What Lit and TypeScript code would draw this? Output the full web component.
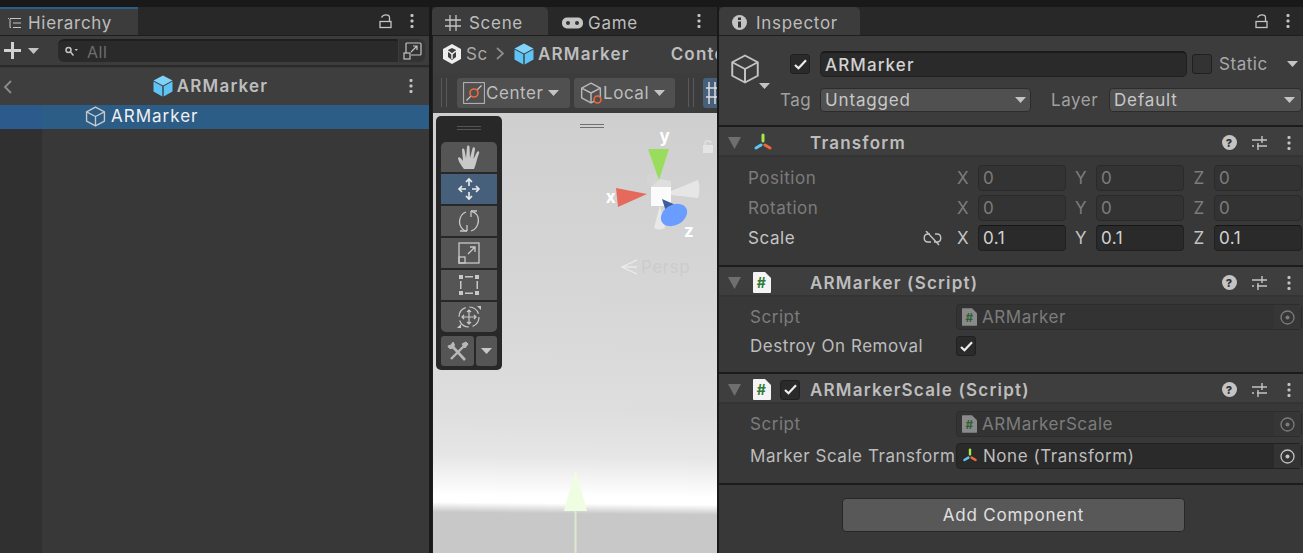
import { LitElement, html, css, svg } from 'lit';
import { customElement } from 'lit/decorators.js';

const dots = html`<svg class="dots" width="4" height="14" viewBox="0 0 4 14"><rect x="0.5" y="0" width="3" height="3" rx="1" fill="#c4c4c4"/><rect x="0.5" y="5.5" width="3" height="3" rx="1" fill="#c4c4c4"/><rect x="0.5" y="11" width="3" height="3" rx="1" fill="#c4c4c4"/></svg>`;

const lock = html`<svg width="13" height="15" viewBox="0 0 13 15" fill="none" stroke="#c4c4c4" stroke-width="1.3"><rect x="1" y="7.5" width="11" height="6"/><path d="M10.5 7.5 V3.5 C10.5 1.5 9 .8 7 .8 C5 .8 3.5 1.5 2.5 3.5" /></svg>`;

const cube = (size: number, color = '#c4c4c4') => html`<svg width=${size} height=${size} viewBox="0 0 20 20" fill="none" stroke=${color} stroke-width="1.3" stroke-linejoin="round"><path d="M10 1 L18.500 5.500 V14.500 L10 19 L1.500 14.500 V5.500 Z"/><path d="M1.500 5.500 L10 10 L18.500 5.500 M10 10 V19"/></svg>`;

const blueCube = html`<svg width="20" height="22" viewBox="0 0 20 22"><path d="M10 .5 L19.500 5.500 L10 10.500 L.5 5.500 Z" fill="#7fd3fb"/><path d="M.5 6.500 L9.300 11.300 V21.500 L.5 16.500 Z" fill="#5ec4f6"/><path d="M19.500 6.500 L10.700 11.300 V21.500 L19.500 16.500 Z" fill="#5ec4f6"/></svg>`;

const triangle = (color: string, w = 11, h = 6) => html`<svg width=${w} height=${h} viewBox="0 0 11 6"><path d="M0 0 H11 L5.500 6 Z" fill=${color}/></svg>`;

const foldout = html`<svg width="13" height="13" viewBox="0 0 13 13"><path d="M0 1 H13 L6.500 13 Z" fill="#6f6f6f"/></svg>`;

const transformIcon = (size: number) => html`<svg width=${size} height=${size} viewBox="0 0 20 20" fill="none" stroke-width="3" stroke-linecap="round"><path d="M10 2 V8" stroke="#a6e64f"/><path d="M8 12 L3 15" stroke="#5cc6f5"/><path d="M12 12 L17 15" stroke="#f0683c"/></svg>`;

const scriptIcon = (dim = false) => html`<svg width=${dim ? 15 : 18} height=${dim ? 18 : 21} viewBox="0 0 18 21"><path d="M1 0 H12 L18 6 V20 Q18 21 17 21 H1 Q0 21 0 20 V1 Q0 0 1 0 Z" fill=${dim ? '#8a8a8a' : '#f4f4f4'}/><text x="9" y="16" text-anchor="middle" font-family="Inter" font-weight="700" font-size="14" fill=${dim ? '#2f5f33' : '#2f7a37'}>#</text></svg>`;

const check = html`<svg width="13" height="11" viewBox="0 0 13 11" fill="none" stroke="#eeeeee" stroke-width="2.200"><path d="M1 6 L4.500 9.300 L12 1.300"/></svg>`;

const help = html`<svg width="15" height="15" viewBox="0 0 15 15"><circle cx="7.500" cy="7.500" r="7.500" fill="#c4c4c4"/><text x="7.500" y="11.500" text-anchor="middle" font-family="Inter" font-weight="800" font-size="11" fill="#333">?</text></svg>`;

const sliders = html`<svg width="15" height="14" viewBox="0 0 15 14" fill="none" stroke="#c4c4c4" stroke-width="1.400"><path d="M0 4 H15 M10 0 V7 M0 10 H2 M5 10 H15 M6 7 V14"/></svg>`;

const target = (color: string) => html`<svg width="15" height="15" viewBox="0 0 15 15"><circle cx="7.500" cy="7.500" r="6.500" fill="none" stroke=${color} stroke-width="1.300"/><circle cx="7.500" cy="7.500" r="2" fill=${color}/></svg>`;

const headerIcons = html`<span class="hicons">${help}${sliders}${dots}</span>`;

const toolIcons = [
  svg`<path d="M7 24 C3 19 1 15 1 13 C2 11 4 13 6 16 L5 5 C5 3 7 3 7.500 5 L9 13 L10 2 C10 0 12.500 0 12.500 2 L13 13 L15.500 3.500 C16 1.500 18 2 18 4 L16.500 14 L20 7 C21 5.500 23 6.500 22 8.500 C20 13 19 20 17 24 Z" fill="#c8c8c8"/>`,
  svg`<g fill="none" stroke="#eeeeee" stroke-width="1.600"><path d="M12 2 V9 M12 15 V22 M2 12 H9 M15 12 H22"/><path d="M9 5 L12 2 L15 5 M9 19 L12 22 L15 19 M5 9 L2 12 L5 15 M19 9 L22 12 L19 15"/></g>`,
  svg`<g fill="none" stroke="#c8c8c8" stroke-width="1.300"><path d="M9 3 C3 5 1 13 4 18 C5.500 20.500 8 22 10 22"/><path d="M14 22 C21 20 23 11 20 6 C18.500 3.500 16 2.500 14 2"/><path d="M14 2 H20 M14 2 V8 M10 22 H3 M10 22 V16"/></g>`,
  svg`<g fill="none" stroke="#c8c8c8" stroke-width="1.300"><rect x="2" y="2" width="20" height="20"/><rect x="2" y="16" width="6" height="6"/><path d="M11 13 L18 6 M13 6 H18 V11"/></g>`,
  svg`<g fill="#c8c8c8"><rect x="2" y="2" width="4" height="4"/><rect x="18" y="2" width="4" height="4"/><rect x="2" y="18" width="4" height="4"/><rect x="18" y="18" width="4" height="4"/><rect x="8" y="3" width="8" height="1.500"/><rect x="8" y="19.500" width="8" height="1.500"/><rect x="3" y="8" width="1.500" height="8"/><rect x="19.500" y="8" width="1.500" height="8"/></g>`,
  svg`<g fill="none" stroke="#c8c8c8" stroke-width="1.200"><circle cx="12" cy="12" r="10" stroke-dasharray="12 3.700"/><path d="M12 5 V19 M5 12 H19 M10 7 L12 5 L14 7 M10 17 L12 19 L14 17 M7 10 L5 12 L7 14 M17 10 L19 12 L17 14"/></g><path d="M20 1 H24 V5 Z M0 23 L4 19 V23 Z" fill="#c8c8c8"/>`,
];

@customElement('app-root')
export class AppRoot extends LitElement {
  static styles = css`
    :host {
      display: flex;
      width: 1303px;
      height: 553px;
      overflow: hidden;
      padding-top: 7px;
      box-sizing: border-box;
      background: #191919;
      font-family: Inter, 'Noto Sans', sans-serif;
      font-size: 17px;
      color: #c4c4c4;
      letter-spacing: 0.55px;
      gap: 3px;
    }
    svg { display: block; flex: none; }
    .panel { display: flex; flex-direction: column; min-width: 0; overflow: hidden; }
    .hier { width: 429px; background: #383838; }
    .scene { width: 285px; margin-right: -1px; background: #383838; }
    .insp { flex: 1; margin-left: 0; background: #383838; }

    .tabs { height: 29px; flex: none; display: flex; align-items: center; background: #282828; border-bottom: 1px solid #1e1e1e; box-sizing: border-box; }
    .tab { height: 100%; display: flex; align-items: center; background: #3c3c3c; box-sizing: border-box; border-radius: 5px 5px 0 0; flex: none; padding-top: 3px; letter-spacing: 0.7px; }
    .tab.plain { background: none; }
    .tabs .right { margin-left: auto; display: flex; align-items: center; }

    .h-tab { width: 138px; padding-left: 8px; gap: 7px; border-top: 2px solid #2a5d8a; border-radius: 0; color: #bdbdbd; padding-top: 2px; }
    .h-lock { gap: 18px; margin-right: 15px; }
    .h-tools { height: 31px; flex: none; display: flex; align-items: center; background: #3c3c3c; border-bottom: 2px solid #2a2a2a; box-sizing: border-box; padding-left: 4px; }
    .plus { width: 17px; height: 17px; position: relative; margin-right: 7px; }
    .plus::before, .plus::after { content: ''; position: absolute; background: #d2d2d2; }
    .plus::before { left: 0; right: 0; top: 7px; height: 3px; }
    .plus::after { top: 0; bottom: 0; left: 7px; width: 3px; }
    .search { margin-left: 19px; width: 340px; height: 23px; border-radius: 6px 0 0 6px; background: #2a2a2a; border-top: 2px solid #1f1f1f; box-sizing: border-box; display: flex; align-items: center; gap: 9px; padding-left: 7px; color: #6e6e6e; font-size: 16px; }
    .scope { width: 26px; height: 23px; margin-left: 1px; background: #333; border-radius: 0 6px 6px 0; display: flex; align-items: center; justify-content: center; }
    .crumb { height: 37px; flex: none; display: flex; align-items: center; background: #3e3e3e; position: relative; box-sizing: border-box; }
    .h-crumb { justify-content: center; gap: 4px; font-weight: 600; letter-spacing: 1.2px; padding: 0 4px 2px 0; margin-top: 1px; color: #bdbdbd; }
    .back { position: absolute; left: 3px; top: 12px; }
    .h-crumb .dots { position: absolute; right: 16px; top: 11px; }
    .sel { height: 24px; flex: none; display: flex; align-items: center; background: #2c5d87; padding: 0 0 2px 85px; box-sizing: border-box; gap: 5px; color: #f0f0f0; position: relative; letter-spacing: 1px; }
    .sel::before { content: ''; position: absolute; left: 0; top: 0; bottom: 0; width: 42px; background: #2d5a8c; }
    .gutter { flex: 1; width: 42px; background: #303030; }

    .s-tab { width: 116px; padding-left: 13px; gap: 8px; color: #bdbdbd; }
    .g-tab { padding-left: 14px; gap: 5px; color: #bdbdbd; }
    .s-crumb { padding: 0 0 2px 10px; white-space: nowrap; font-weight: 600; letter-spacing: 1.2px; color: #bdbdbd; overflow: hidden; border-left: 1px solid #202020; }
    .s-crumb .sc { width: 20px; margin-left: 5px; font-weight: 400; letter-spacing: 0.55px; color: #a8a8a8; }
    .s-crumb .chev { margin: 0 10px 0 10px; }
    .s-crumb .name { margin-left: 4px; }
    .s-crumb .ctx { margin-left: 41px; }
    .s-bar { height: 40px; flex: none; display: flex; align-items: center; background: #3c3c3c; padding-left: 8px; border-left: 1px solid #202020; padding-bottom: 1px; box-sizing: border-box; }
    .grip { width: 6px; height: 29px; border-left: 1px solid #595959; border-right: 1px solid #595959; box-sizing: border-box; margin-right: 10px; flex: none; }
    .grip.second { margin: 0 9px; }
    .tbtn { height: 30px; background: #505050; border-radius: 3px; display: flex; align-items: center; box-sizing: border-box; padding-left: 6px; gap: 1px; margin-right: 4px; color: #bdbdbd; flex: none; }
    .tbtn.center { width: 113px; gap: 1px; }
    .tbtn.local { width: 101px; }
    .tbtn > svg:last-child { margin-left: 4px; }
    .cube-wrap { position: relative; }
    .cube-wrap .dot { position: absolute; left: 13px; top: 13px; }
    .blue { width: 20px; height: 30px; background: #46607c; border-radius: 3px 0 0 3px; flex: none; padding: 4px 0 0 3px; box-sizing: border-box; }

    .view { flex: 1; position: relative; overflow: hidden; border-left: 1px solid #202020; background: linear-gradient(180.6deg, #cfcfcf 0, #d6d6d6 180px, #dedede 300px, #e6e6e6 345px, #ffffff 385px, #ffffff 392px, #c8c8c8 402px); }
    .tools { position: absolute; left: 3px; top: 3px; width: 66px; height: 254px; background: #282828; border-radius: 5px; box-sizing: border-box; padding: 26px 5px 0; display: flex; flex-direction: column; gap: 2px; }
    .handle { position: absolute; height: 1px; border-top: 1px solid #555; border-bottom: 1px solid #555; padding-top: 1px; width: 24px; }
    .tools .handle { left: 21px; top: 10px; }
    .view > .handle { left: 147px; top: 11px; border-color: #707070; }
    .tool { height: 30px; flex: none; background: #555; display: flex; align-items: center; justify-content: center; }
    .tool.first { border-radius: 5px 5px 0 0; }
    .tool.last { border-radius: 0 0 5px 5px; }
    .tool.on { background: #46607c; }
    .tool-row { display: flex; gap: 2px; margin-top: 2px; }
    .tool-row .tool { border-radius: 3px; }
    .gizmo { position: absolute; left: 164px; top: 8px; }
    .z-label { position: absolute; left: 251px; top: 108px; color: #fff; font-weight: 700; font-size: 17px; }
    .persp { position: absolute; left: 188px; top: 144px; display: flex; align-items: center; gap: 3px; color: #cccccc; }
    .lock-s { position: absolute; left: 270px; top: 27px; }
    .arrow { position: absolute; left: 130px; top: 357px; }

    .i-tab { width: 141px; padding-left: 13px; gap: 9px; color: #bdbdbd; }
    .i-right { gap: 18px; margin-right: 13px; }
    .i-head { height: 91px; flex: none; background: #3c3c3c; border-bottom: 2px solid #1c1c1c; box-sizing: border-box; display: grid; grid-template-columns: 60px 41px 1fr; grid-template-rows: 26px 24px; row-gap: 11px; align-content: start; padding-top: 15px; position: relative; }
    .big-cube { margin: 0 0 0 11px; grid-row: 1; position: relative; top: 3px; }
    .i-tri { position: absolute; left: 40px; top: 47px; }
    .chk { width: 20px; height: 20px; border-radius: 3px; background: #2a2a2a; border: 1px solid #202020; display: flex; align-items: center; justify-content: center; box-sizing: border-box; flex: none; }
    .chk.empty { background: #333; }
    .i-chk { margin: 3px 0 0 11px; }
    .name-row { display: flex; align-items: center; }
    .name-field { width: 367px; height: 26px; background: #2a2a2a; border: 1px solid #202020; border-top: 2px solid #1a1a1a; border-radius: 5px; box-sizing: border-box; display: flex; align-items: center; padding-left: 4px; font-weight: 500; letter-spacing: 1.1px; color: #d2d2d2; }
    .name-row .chk { margin-left: 5px; }
    .static { margin-left: 7px; color: #a8a8a8; }
    .name-row svg { margin-left: auto; margin-right: 5px; }
    .tag-row { grid-column: 1 / 4; display: flex; align-items: center; padding-left: 61px; }
    .lbl { color: #a0a0a0; }
    .drop { height: 24px; background: #505050; border: 1px solid #2c2c2c; border-radius: 4px; box-sizing: border-box; display: flex; align-items: center; justify-content: space-between; padding: 0 4px 0 4px; color: #c8c8c8; letter-spacing: 0.85px; }
    .tag-row .lbl { width: 40px; }
    .drop.tag { width: 211px; }
    .tag-row .layer-lbl { margin-left: 20px; width: 58px; }
    .drop.layer { width: 193px; padding-right: 6px; }

    .comp { border-bottom: 2px solid #1c1c1c; box-sizing: border-box; display: flex; flex-direction: column; flex: none; }
    .c-head { height: 30px; background: #3e3e3e; border-bottom: 2px solid #343434; box-sizing: border-box; display: grid; grid-template-columns: 25px 27px 30px 1fr auto; align-items: center; padding: 3px 0 0 9px; font-weight: 600; letter-spacing: 1.2px; color: #bdbdbd; }
    .hicons { display: flex; align-items: center; gap: 15px; margin-right: 12px; }
    .hicons .dots { margin-left: 5px; }
    .rows-t { height: 108px; padding: 8px 1px 0 29px; box-sizing: border-box; display: flex; flex-direction: column; gap: 4px; }
    .t-row { height: 26px; display: grid; grid-template-columns: 168px 32px 30px 88px 30px 88px 30px 88px; align-items: center; color: #7c7c7c; }
    .t-row .ax { text-align: center; }
    .t-row .link { justify-self: end; margin-right: 6px; }
    .t-row.live { color: #c4c4c4; }
    .num { height: 26px; background: #333; border: 1px solid #2a2a2a; border-radius: 4px; box-sizing: border-box; display: flex; align-items: center; padding-left: 4px; color: #7c7c7c; }
    .live .num { background: #2a2a2a; border-color: #202020; border-top-color: #161616; color: #d2d2d2; }
    .rows-s { padding: 7px 1px 0 31px; box-sizing: border-box; display: flex; flex-direction: column; }
    .rows-s.one { height: 75px; }
    .rows-s.two { height: 79px; }
    .s-row { height: 26px; display: grid; grid-template-columns: 206px 1fr; align-items: center; color: #bdbdbd; white-space: nowrap; }
    .s-row.dim { color: #7c7c7c; }
    .one .s-row:last-child { margin-top: 3px; }
    .two .s-row:last-child { margin-top: 6px; }
    .obj { height: 26px; background: #2a2a2a; border: 1px solid #222; border-radius: 4px; box-sizing: border-box; display: flex; align-items: center; padding-left: 5px; gap: 5px; }
    .obj .pick { margin-left: auto; width: 27px; height: 100%; background: #333; display: flex; align-items: center; justify-content: center; }
    .dim .obj { background: #333; border-color: #2c2c2c; }
    .dim .obj .pick { background: #363636; }
    .add-wrap { display: flex; justify-content: flex-start; padding: 13px 0 0 123px; }
    .add { width: 343px; height: 34px; background: #585858; border: 1px solid #272727; border-radius: 4px; box-sizing: border-box; display: flex; align-items: center; justify-content: center; color: #e0e0e0; letter-spacing: 0.8px; }
    .tool-row .wrench { width: 33px; }
    .tool-row .more { width: 21px; }
    .scene-dots { margin-right: 16px; }
  `;

  private compHeader(icon: unknown, name: string, toggled = false) {
    return html`<div class="c-head">
      ${foldout}${icon}
      <span>${toggled ? html`<span class="chk">${check}</span>` : ''}</span>
      <span>${name}</span>
      ${headerIcons}
    </div>`;
  }

  private xyzRow(label: string, x: string, y: string, z: string, live = false) {
    const link = live
      ? html`<svg class="link" width="19" height="15" viewBox="0 0 19 15" fill="none" stroke="#c4c4c4" stroke-width="1.400"><path d="M7 3 H5 C0 3 0 11 5 11 H8 M12 3 H14 C19 3 19 11 14 11 H11 M3 0 L16 14"/></svg>`
      : '';
    return html`<div class="t-row ${live ? 'live' : ''}">
      <span>${label}</span>
      <span class="linkcell">${link}</span>
      <span class="ax">X</span><span class="num">${x}</span>
      <span class="ax">Y</span><span class="num">${y}</span>
      <span class="ax">Z</span><span class="num">${z}</span>
    </div>`;
  }

  private hierarchy() {
    return html`<div class="panel hier">
      <div class="tabs">
        <div class="tab h-tab">
          <svg width="13" height="12" viewBox="0 0 13 12" fill="none" stroke="#c4c4c4" stroke-width="1.200"><path d="M2 1.500 H13 M5 6 H13 M5 10.500 H13"/><path d="M0 1.500 H1 M2 2 V10.500 H3" stroke-width="1"/></svg>
          Hierarchy
        </div>
        <div class="right h-lock">${lock}${dots}</div>
      </div>
      <div class="h-tools">
        <span class="plus"></span>${triangle('#c4c4c4')}
        <div class="search">
          <svg width="13" height="11" viewBox="0 0 13 11" fill="none" stroke="#c4c4c4" stroke-width="1.500"><circle cx="3.500" cy="4" r="2.500"/><path d="M5.500 6 L8.500 9.500"/><path d="M9.500 3 H13 L11.250 5 Z" fill="#c4c4c4" stroke="none"/></svg>
          All
        </div>
        <div class="scope"><svg width="19" height="18" viewBox="0 0 19 18" fill="none" stroke="#c4c4c4" stroke-width="1.200"><path d="M3 11 V2 Q3 1 4 1 H17 Q18 1 18 2 V12 Q18 13 17 13 H8"/><rect x="1" y="11" width="6" height="6"/><path d="M8 10 L14 4 M10 4 H14 V8"/></svg></div>
      </div>
      <div class="crumb h-crumb">
        <svg class="back" width="9" height="14" viewBox="0 0 9 14" fill="none" stroke="#8c8c8c" stroke-width="1.800"><path d="M8 1 L2 7 L8 13"/></svg>
        ${blueCube}ARMarker${dots}
      </div>
      <div class="sel">${cube(21, '#c8c8c8')}ARMarker</div>
      <div class="gutter"></div>
    </div>`;
  }

  private sceneView() {
    return html`<div class="panel scene">
      <div class="tabs">
        <div class="tab s-tab">
          <svg width="16" height="16" viewBox="0 0 16 16" fill="none" stroke="#c4c4c4" stroke-width="1.300"><path d="M5 0 V16 M11 0 V16 M0 5 H16 M0 11 H16"/></svg>
          Scene
        </div>
        <div class="tab plain g-tab">
          <svg width="21" height="12" viewBox="0 0 21 12"><rect width="21" height="11" y="0.500" rx="5" fill="#c4c4c4"/><circle cx="6" cy="6" r="2" fill="#333"/><circle cx="15" cy="6" r="2" fill="#333"/></svg>
          Game
        </div>
        <div class="right scene-dots">${dots}</div>
      </div>
      <div class="crumb s-crumb">
        <svg width="18" height="20" viewBox="0 0 18 20"><path d="M9 0 L18 5 V15 L9 20 L0 15 V5 Z" fill="#eeeeee"/><path d="M5 6 L9 4 L13 6 V13 L9 16 L5 13 Z" fill="#3e3e3e"/><path d="M5 7 L9 10 L13 7 M9 10 V15" stroke="#eeeeee" stroke-width="1.500" fill="none"/></svg>
        <span class="sc">Sc</span>
        <svg class="chev" width="8" height="13" viewBox="0 0 8 13" fill="none" stroke="#8c8c8c" stroke-width="1.800"><path d="M1 1 L7 6.500 L1 12"/></svg>
        ${blueCube}<span class="name">ARMarker</span><span class="ctx">Conte</span>
      </div>
      <div class="s-bar">
        <span class="grip"></span>
        <div class="tbtn center">
          <svg width="22" height="22" viewBox="0 0 22 22" fill="none"><rect x=".6" y=".6" width="20.800" height="20.800" stroke="#b8b8b8" stroke-width="1"/><path d="M3.500 18.500 L8 14 M14 8 L18.500 3.500" stroke="#c8c8c8" stroke-width="1.200"/><circle cx="11" cy="11" r="4" stroke="#f0683c" stroke-width="1.600"/></svg>
          Center${triangle('#c4c4c4')}
        </div>
        <div class="tbtn local">
          <span class="cube-wrap">${cube(22, '#b8b8b8')}<svg class="dot" width="9" height="9" viewBox="0 0 9 9" fill="none"><circle cx="4.500" cy="4.500" r="3.500" fill="#505050" stroke="#f0683c" stroke-width="1.500"/></svg></span>
          Local${triangle('#c4c4c4')}
        </div>
        <span class="grip second"></span>
        <div class="blue"><svg width="12" height="22" viewBox="0 0 12 22" fill="none" stroke="#dddddd" stroke-width="1.500"><path d="M3 0 V22 M9 0 V22 M0 6 H12 M0 15 H12"/></svg></div>
      </div>
      <div class="view">
        <span class="handle"></span>
        ${this.gizmo()}
        <svg class="arrow" width="25" height="84" viewBox="0 0 25 84"><path d="M12.500 0 L24 41 H1 Z" fill="#effde2"/><rect x="11.500" y="41" width="2" height="43" fill="#dce8d0"/></svg>
        <div class="tools">
          <span class="handle"></span>
          ${toolIcons.map((p, i) => html`<div class="tool ${i === 0 ? 'first' : ''} ${i === 1 ? 'on' : ''} ${i === 5 ? 'last' : ''}"><svg width="24" height="24" viewBox="0 0 24 24">${p}</svg></div>`)}
          <div class="tool-row">
            <div class="tool wrench"><svg width="22" height="21" viewBox="0 0 22 21" fill="none" stroke="#b8b8b8"><path d="M6 6 L18 19" stroke-width="2.600"/><path d="M1 5 Q2 9 6 7 Q9 4 6 1 L4 4 Z" fill="#b8b8b8" stroke-width="1"/><path d="M17 5 L4 18" stroke-width="2.400"/><path d="M15 3 L19 1 L21 3 L18 7 Z" fill="#b8b8b8" stroke-width="1"/></svg></div>
            <div class="tool more">${triangle('#c8c8c8')}</div>
          </div>
        </div>
      </div>
    </div>`;
  }

  private gizmo() {
    return html`
      <svg class="gizmo" width="110" height="112" viewBox="0 0 110 112">
        <path d="M74 70 L101 59 Q104 68 101 77 L74 74 Z" fill="#e6e6e6"/>
        <path d="M50 62 C46 52 58 50 62 56 L64 68 L54 68 Z" fill="#d4d4d4"/>
        <path d="M63 84 L68 107 Q62 110 57 107 Z" fill="#e8e8e8"/>
        <path d="M54 66 L63 58 L74 60 L74 67 Z" fill="#dedede"/>
        <path d="M51 28 L72 28 L62 59 Z" fill="#98de5c"/>
        <path d="M19 67 L50 73 L21 86 Z" fill="#e56a5c"/>
        <rect x="54" y="66" width="20" height="19" fill="#fbfbfb"/>
        <path d="M65 78 L88 88 L73 103 Z" fill="#3f5e9e"/>
        <ellipse cx="77" cy="94" rx="14" ry="10" transform="rotate(-30 77 94)" fill="#6b9cff"/>
        <text x="68" y="21" text-anchor="middle" font-family="Inter" font-weight="700" font-size="17" fill="#fff">y</text>
        <text x="14" y="82" text-anchor="middle" font-family="Inter" font-weight="700" font-size="17" fill="#fff">x</text>
      </svg>
      <span class="z-label">z</span>
      <svg class="lock-s" width="10" height="13" viewBox="0 0 10 13"><rect y="5" width="10" height="8" fill="#e4e4e4"/><path d="M2 5 V3 Q2 .8 5 .8 Q8 .8 8 3" fill="none" stroke="#e4e4e4" stroke-width="1.200"/></svg>
      <div class="persp"><svg width="17" height="16" viewBox="0 0 17 16" fill="none" stroke="#ececec" stroke-width="1.300"><path d="M16 1 L1 8 L16 15"/><path d="M1 8 H16"/></svg>Persp</div>
    `;
  }

  private inspector() {
    return html`<div class="panel insp">
      <div class="tabs">
        <div class="tab i-tab">
          <svg width="15" height="15" viewBox="0 0 15 15"><circle cx="7.500" cy="7.500" r="7.500" fill="#c4c4c4"/><rect x="6" y="6.500" width="3" height="6" fill="#333"/><rect x="6" y="2.500" width="3" height="2.500" fill="#333"/></svg>
          Inspector
        </div>
        <div class="right i-right">${lock}${dots}</div>
      </div>
      <div class="i-head">
        <div class="big-cube">${cube(30)}</div>
        <div class="i-tri">${triangle('#c4c4c4')}</div>
        <span class="chk i-chk">${check}</span>
        <div class="name-row">
          <div class="name-field">ARMarker</div>
          <span class="chk empty"></span>
          <span class="static">Static</span>
          ${triangle('#c4c4c4')}
        </div>
        <div class="tag-row">
          <span class="lbl">Tag</span>
          <div class="drop tag">Untagged${triangle('#c4c4c4')}</div>
          <span class="lbl layer-lbl">Layer</span>
          <div class="drop layer">Default${triangle('#c4c4c4')}</div>
        </div>
      </div>
      <div class="comp">
        ${this.compHeader(transformIcon(20), 'Transform')}
        <div class="rows-t">
          ${this.xyzRow('Position', '0', '0', '0')}
          ${this.xyzRow('Rotation', '0', '0', '0')}
          ${this.xyzRow('Scale', '0.1', '0.1', '0.1', true)}
        </div>
      </div>
      <div class="comp">
        ${this.compHeader(scriptIcon(), 'ARMarker (Script)')}
        <div class="rows-s one">
          <div class="s-row dim"><span>Script</span><div class="obj">${scriptIcon(true)}ARMarker<span class="pick">${target('#7c7c7c')}</span></div></div>
          <div class="s-row"><span>Destroy On Removal</span><span class="chk">${check}</span></div>
        </div>
      </div>
      <div class="comp">
        ${this.compHeader(scriptIcon(), 'ARMarkerScale (Script)', true)}
        <div class="rows-s two">
          <div class="s-row dim"><span>Script</span><div class="obj">${scriptIcon(true)}ARMarkerScale<span class="pick">${target('#7c7c7c')}</span></div></div>
          <div class="s-row"><span>Marker Scale Transform</span><div class="obj">${transformIcon(16)}None (Transform)<span class="pick">${target('#c4c4c4')}</span></div></div>
        </div>
      </div>
      <div class="add-wrap"><div class="add">Add Component</div></div>
    </div>`;
  }

  render() {
    return html`${this.hierarchy()}${this.sceneView()}${this.inspector()}`;
  }
}
